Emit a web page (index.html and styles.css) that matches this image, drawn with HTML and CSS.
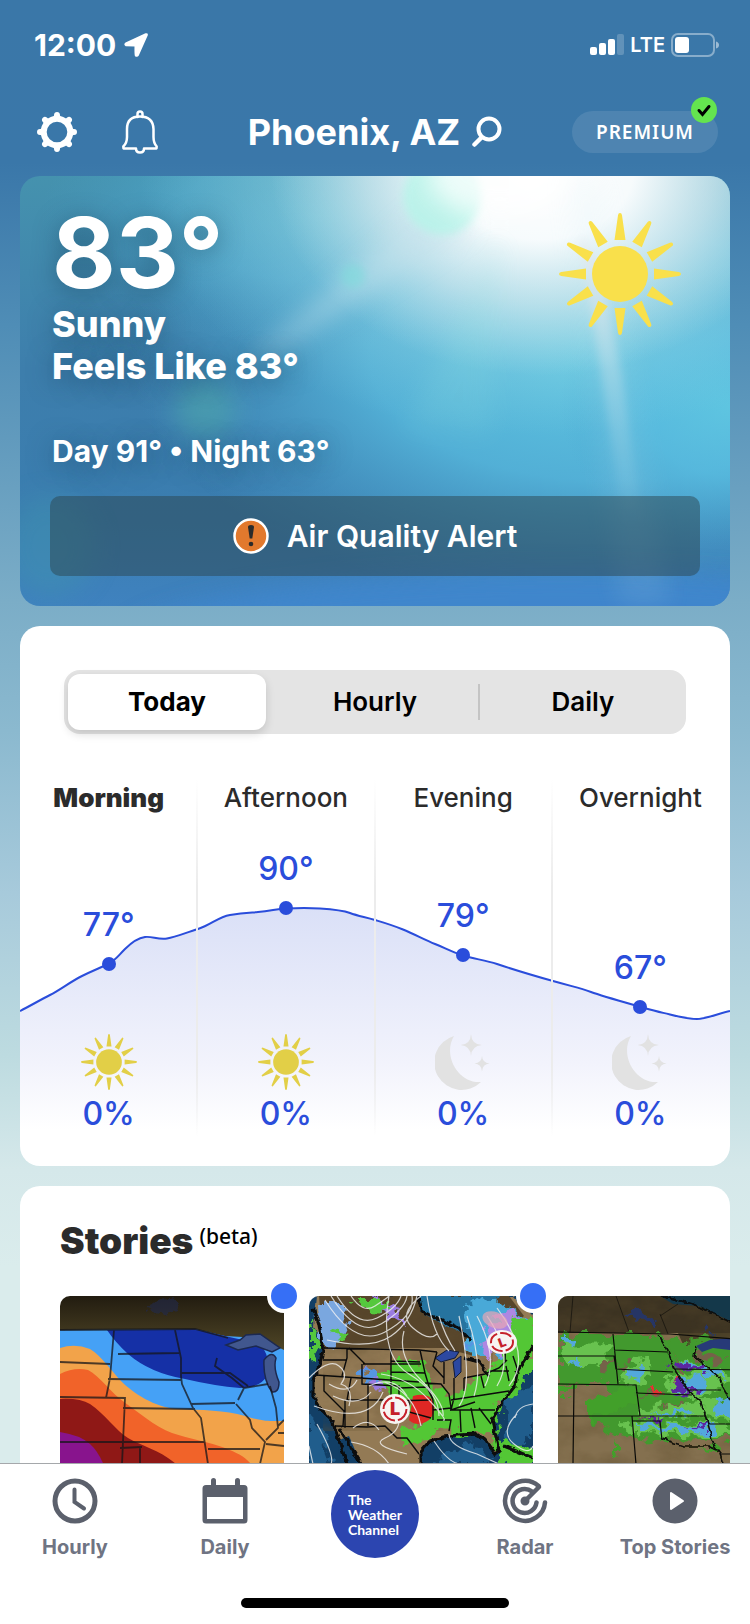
FILE: index.html
```html
<!DOCTYPE html>
<html lang="en">
<head>
  <meta charset="UTF-8" />
  <meta name="viewport" content="width=device-width, initial-scale=1.0"/>
  <title>Weather - Phoenix, AZ</title>
  <link rel="stylesheet" href="styles.css">
</head>
<body>
  <!-- shared icons -->
  <svg class="defs" aria-hidden="true">
    <defs>
      <path id="ray" d="M55.5 27L59 2.2Q59.3 0 61 0T63 2.2L66.5 27z"/>
      <symbol id="sun" viewBox="0 0 122 122">
        <circle cx="61" cy="61" r="28"/>
        <use href="#ray"/>
        <use href="#ray" transform="rotate(30 61 61)"/>
        <use href="#ray" transform="rotate(60 61 61)"/>
        <use href="#ray" transform="rotate(90 61 61)"/>
        <use href="#ray" transform="rotate(120 61 61)"/>
        <use href="#ray" transform="rotate(150 61 61)"/>
        <use href="#ray" transform="rotate(180 61 61)"/>
        <use href="#ray" transform="rotate(210 61 61)"/>
        <use href="#ray" transform="rotate(240 61 61)"/>
        <use href="#ray" transform="rotate(270 61 61)"/>
        <use href="#ray" transform="rotate(300 61 61)"/>
        <use href="#ray" transform="rotate(330 61 61)"/>
      </symbol>
      <symbol id="moon" viewBox="0 0 56 56">
        <path d="M19 2A27.5 27.5 0 1 0 46 48C24 50 7 22 19 2z"/>
        <path d="M36 0Q36.500 10.500 47 11Q36.500 12 36 22Q35.500 12 25.500 11Q35.500 10.500 36 0z"/>
        <path d="M47 22Q47.500 29 54.500 29.500Q47.500 30 47 37.500Q46.500 30 39.500 29.500Q46.500 29 47 22z"/>
      </symbol>
      <path id="tooth" d="M16.500 8L17 3Q17.200 0 20 0T23 3L23.500 8z"/>
      <filter id="rough" x="-10%" y="-10%" width="120%" height="120%">
        <feTurbulence type="fractalNoise" baseFrequency="0.09" numOctaves="3" seed="4"/>
        <feDisplacementMap in="SourceGraphic" scale="20" xChannelSelector="R" yChannelSelector="G"/>
      </filter>
      <filter id="coast" x="-5%" y="-5%" width="110%" height="110%">
        <feTurbulence type="fractalNoise" baseFrequency="0.15" numOctaves="2" seed="7"/>
        <feDisplacementMap in="SourceGraphic" scale="5" xChannelSelector="R" yChannelSelector="G"/>
      </filter>
      <filter id="terrain" x="0" y="0" width="100%" height="100%">
        <feTurbulence type="fractalNoise" baseFrequency="0.03 0.05" numOctaves="4" seed="9"/>
        <feColorMatrix values="0 0 0 0 0.12  0 0 0 0 0.08  0 0 0 0 0.03  1.6 0 0 0 -0.55"/>
      </filter>
    </defs>
  </svg>

  <div class="app">
    <div class="status">
      <div class="status-left">
        <span class="clock">12:00</span>
        <svg width="24" height="24" viewBox="0 0 24 24"><path fill="#fff" d="M1.500 9.500L21.500.3Q24.500-.3 23.700 2.500L14.800 22.500Q13.500 24.800 11 23.200Q10.300 22.500 10.500 13.500L1.700 13.200Q-1 11.500 1.500 9.500z"/></svg>
      </div>
      <div class="status-right">
        <svg width="34" height="22" viewBox="0 0 34 22" fill="#fff">
          <rect x="0" y="13" width="7" height="8" rx="2"/>
          <rect x="9" y="9" width="7" height="12" rx="2"/>
          <rect x="18" y="5" width="7" height="16" rx="2"/>
          <rect x="27" y="0" width="7" height="21" rx="2" opacity=".2"/>
        </svg>
        <span class="network">LTE</span>
        <svg width="48" height="24" viewBox="0 0 48 24">
          <rect x="1" y="1" width="42" height="22" rx="6" fill="none" stroke="#fff" stroke-opacity=".4" stroke-width="2"/>
          <rect x="4" y="4" width="14" height="16" rx="3" fill="#fff"/>
          <path d="M45 8.500Q48 9.500 48 12T45 15.500z" fill="#fff" fill-opacity=".5"/>
        </svg>
      </div>
    </div>

    <header class="header">
      <div class="header-actions">
        <button class="icon-button" aria-label="Settings">
          <svg width="40" height="40" viewBox="0 0 40 40" fill="#fff">
            <circle cx="20" cy="20" r="13.300" fill="none" stroke="#fff" stroke-width="6"/>
            <use href="#tooth"/>
            <use href="#tooth" transform="rotate(45 20 20)"/>
            <use href="#tooth" transform="rotate(90 20 20)"/>
            <use href="#tooth" transform="rotate(135 20 20)"/>
            <use href="#tooth" transform="rotate(180 20 20)"/>
            <use href="#tooth" transform="rotate(225 20 20)"/>
            <use href="#tooth" transform="rotate(270 20 20)"/>
            <use href="#tooth" transform="rotate(315 20 20)"/>
          </svg>
        </button>
        <button class="icon-button" aria-label="Notifications">
          <svg width="36" height="44" viewBox="0 0 36 44" fill="none" stroke="#fff" stroke-width="2.500" stroke-linejoin="round" stroke-linecap="round">
            <path d="M15.500 7V4Q15.500 1.500 18 1.500T20.500 4V7"/>
            <path d="M14 38.500H1.500L1.300 36.500Q5 33 5 27V19Q5 6.500 18 6.500T31.500 19V27Q31.500 33 34.700 36.500L34.500 38.500H22Q22 42.500 18 42.500T14 38.500z"/>
          </svg>
        </button>
      </div>
      <div class="place">
        <h1 class="city">Phoenix, AZ</h1>
        <button class="icon-button" aria-label="Search location">
          <svg width="30" height="32" viewBox="0 0 30 32" fill="none" stroke="#fff" stroke-width="4" stroke-linecap="round">
            <circle cx="17" cy="13" r="10.500"/>
            <path d="M9 22L2.500 28.500" stroke-width="4.500"/>
          </svg>
        </button>
      </div>
      <button class="premium">PREMIUM
        <svg class="premium-check" width="26" height="26" viewBox="0 0 26 26">
          <circle cx="13" cy="13" r="13" fill="#64e44f"/>
          <path d="M8 13.500L11.500 17.500L18 9.500" fill="none" stroke="#000" stroke-width="3" stroke-linecap="round"/>
        </svg>
      </button>
    </header>

    <main class="content">
      <section class="hero">
        <!-- sunlit sky -->
        <svg class="sky" viewBox="0 0 710 430" preserveAspectRatio="none" aria-hidden="true">
          <defs>
            <linearGradient id="skyBase" x1="0" y1="0" x2="0" y2="1">
              <stop offset="0" stop-color="#4592ae"/>
              <stop offset=".45" stop-color="#3d7eac"/>
              <stop offset=".8" stop-color="#3a7db0"/>
              <stop offset="1" stop-color="#3f82bf"/>
            </linearGradient>
            <radialGradient id="aqua">
              <stop offset="0" stop-color="#60c8e2"/>
              <stop offset=".5" stop-color="#58bce0" stop-opacity=".8"/>
              <stop offset="1" stop-color="#4ba4d0" stop-opacity="0"/>
            </radialGradient>
            <radialGradient id="glare">
              <stop offset="0" stop-color="#fff"/>
              <stop offset=".35" stop-color="#fff" stop-opacity=".92"/>
              <stop offset=".65" stop-color="#e6f1f3" stop-opacity=".55"/>
              <stop offset="1" stop-color="#c5e8ee" stop-opacity="0"/>
            </radialGradient>
            <radialGradient id="haze">
              <stop offset="0" stop-color="#d5edf0" stop-opacity=".75"/>
              <stop offset=".6" stop-color="#a9dce5" stop-opacity=".4"/>
              <stop offset="1" stop-color="#8fd2e2" stop-opacity="0"/>
            </radialGradient>
            <linearGradient id="beam" x1="0" y1="0" x2="0" y2="1">
              <stop offset="0" stop-color="#e6e6ea" stop-opacity=".7"/>
              <stop offset="1" stop-color="#b5e0ee" stop-opacity="0"/>
            </linearGradient>
            <filter id="soft" filterUnits="userSpaceOnUse" x="-60" y="-60" width="830" height="550"><feGaussianBlur stdDeviation="12"/></filter>
            <filter id="softer" filterUnits="userSpaceOnUse" x="-60" y="-60" width="830" height="550"><feGaussianBlur stdDeviation="4"/></filter>
          </defs>
          <rect width="710" height="430" fill="url(#skyBase)"/>
          <ellipse cx="590" cy="180" rx="480" ry="250" fill="url(#aqua)"/>
          <ellipse cx="710" cy="230" rx="170" ry="140" fill="url(#aqua)" opacity=".8"/>
          <ellipse cx="300" cy="40" rx="280" ry="130" fill="url(#aqua)" opacity=".5"/>
          <ellipse cx="540" cy="470" rx="440" ry="75" fill="#4187cf" filter="url(#soft)" opacity=".85"/>
          <ellipse cx="30" cy="370" rx="45" ry="50" fill="#3f92b0" filter="url(#soft)" opacity=".5"/>
          <ellipse cx="520" cy="0" rx="400" ry="260" fill="url(#haze)"/>
          <ellipse cx="520" cy="-10" rx="270" ry="210" fill="url(#glare)"/>
          <path d="M420 20L230 185L245 182L450 50z" fill="#c5e2ec" opacity=".5" filter="url(#soft)"/>
          <path d="M545 0L600 430L650 430L580 0z" fill="#cdeaf2" opacity=".1" filter="url(#soft)"/>
          <path d="M560 60L580 190L604 350L622 350L602 200L580 90z" fill="url(#beam)" filter="url(#softer)"/>
          <path d="M480 60L385 250L470 260z" fill="#8fe0e0" opacity=".15" filter="url(#soft)"/>
          <circle cx="422" cy="20" r="39" fill="#b4f5e8" opacity=".75" filter="url(#softer)"/>
          <ellipse cx="480" cy="0" rx="70" ry="40" fill="#fff" opacity=".7" filter="url(#soft)"/>
          <circle cx="333" cy="100" r="12" fill="#7fdcdc" opacity=".6" filter="url(#softer)"/>
          <circle cx="185" cy="233" r="30" fill="#4faaa8" opacity=".5" filter="url(#soft)"/>
        </svg>
        <div class="hero-top">
          <div>
            <p class="temp-now">83°</p>
            <p class="condition">Sunny<br>Feels Like 83°</p>
            <p class="range">Day 91° • Night 63°</p>
          </div>
          <svg class="hero-sun" role="img" aria-label="Sunny"><use href="#sun"/></svg>
        </div>
        <button class="alert">
          <svg width="36" height="36" viewBox="0 0 36 36">
            <circle cx="18" cy="18" r="16.500" fill="#e2792d" stroke="#fff" stroke-width="2.500"/>
            <path d="M15 9Q15 7 18 7T21 9L19.300 20.500H16.700z" fill="#2b2b2b"/>
            <circle cx="18" cy="26" r="2.300" fill="#2b2b2b"/>
          </svg>
          Air Quality Alert
        </button>
      </section>

      <section class="card forecast">
        <div class="tabs" role="tablist">
          <button class="tab active" role="tab" aria-selected="true">Today</button>
          <button class="tab" role="tab" aria-selected="false">Hourly</button>
          <button class="tab" role="tab" aria-selected="false">Daily</button>
        </div>
        <div class="chart">
          <svg class="curve" viewBox="0 0 710 356" preserveAspectRatio="none" aria-hidden="true">
            <defs>
              <linearGradient id="fade" gradientUnits="userSpaceOnUse" x1="0" y1="128" x2="0" y2="350">
                <stop offset="0" stop-color="#dae0f7"/>
                <stop offset=".7" stop-color="#f2f3fc"/>
                <stop offset="1" stop-color="#fff"/>
              </linearGradient>
            </defs>
            <path fill="url(#fade)" d="M0 231C10 226 20 220 30 215S50 202 62 196S80 188 88 184S98 176 105 169S118 158 125 157S138 160 147 158.500S165 153 178 149S198 137 210 135S225 133 238 132S256 129 266 128.500S285 127.500 300 128.500S322 130 330 133S345 137 355 140S372 145 383 149.500S405 160 415 164S432 172 443 175.500S465 180 477 184S508 194 533 201S560 208 571 212S600 221 621 227S640 232 650 234.500S668 239 677 239S700 233 710 231V356H0z"/>
            <path fill="none" stroke="#2a4ddb" stroke-width="2" vector-effect="non-scaling-stroke" d="M0 231C10 226 20 220 30 215S50 202 62 196S80 188 88 184S98 176 105 169S118 158 125 157S138 160 147 158.500S165 153 178 149S198 137 210 135S225 133 238 132S256 129 266 128.500S285 127.500 300 128.500S322 130 330 133S345 137 355 140S372 145 383 149.500S405 160 415 164S432 172 443 175.500S465 180 477 184S508 194 533 201S560 208 571 212S600 221 621 227S640 232 650 234.500S668 239 677 239S700 233 710 231"/>
          </svg>
          <ul class="parts">
            <li class="part">
              <h2 class="part-name current">Morning</h2>
              <div class="point" style="padding-top: 89px"><span>77°</span><i class="dot"></i></div>
              <svg class="part-icon sunny"><use href="#sun"/></svg>
              <span class="rain">0%</span>
            </li>
            <li class="part">
              <h2 class="part-name">Afternoon</h2>
              <div class="point" style="padding-top: 33px"><span>90°</span><i class="dot"></i></div>
              <svg class="part-icon sunny"><use href="#sun"/></svg>
              <span class="rain">0%</span>
            </li>
            <li class="part">
              <h2 class="part-name">Evening</h2>
              <div class="point" style="padding-top: 80px"><span>79°</span><i class="dot"></i></div>
              <svg class="part-icon night"><use href="#moon"/></svg>
              <span class="rain">0%</span>
            </li>
            <li class="part">
              <h2 class="part-name">Overnight</h2>
              <div class="point" style="padding-top: 132px"><span>67°</span><i class="dot"></i></div>
              <svg class="part-icon night"><use href="#moon"/></svg>
              <span class="rain">0%</span>
            </li>
          </ul>
        </div>
      </section>

      <section class="card stories">
        <h2 class="stories-title">Stories <span class="beta">(beta)</span></h2>
        <div class="story-row">
          <a class="story" href="#" aria-label="Temperature outlook">
            <svg class="thumb" viewBox="0 0 224 240" preserveAspectRatio="xMidYMin slice">
              <defs>
                <linearGradient id="north" x1="0" y1="0" x2="0" y2="1">
                  <stop offset="0" stop-color="#221c10"/>
                  <stop offset="1" stop-color="#544a28"/>
                </linearGradient>
              </defs>
              <rect width="224" height="60" fill="url(#north)"/>
              <ellipse cx="102" cy="10" rx="14" ry="8" fill="#232c4e" opacity=".6" filter="url(#rough)"/>
              <path d="M0 34L135 33L165 40L200 42L224 54V240H0z" fill="#45a1f6"/>
              <path d="M47 34L135 33L165 40L200 48Q212 62 207 80Q200 92 180 92Q155 90 125 83Q90 77 68 58Q55 46 47 34z" fill="#1530a6"/>
              <path d="M0 52Q15 47 30 53C42 60 52 76 62 86S95 112 118 113S165 114 185 120S210 125 224 125V240H0z" fill="#f2a34a"/>
              <path d="M0 78Q14 71 28 74C40 80 52 98 64 106S95 131 112 137S150 146 165 152S188 162 196 175V240H0z" fill="#f16329"/>
              <path d="M0 103Q20 102 30 108C45 118 55 134 68 142S100 154 116 168L150 240H0z" fill="#8f1816"/>
              <path d="M0 136Q20 139 30 148T46 175V240H0z" fill="#88148d"/>
              <path d="M166 49L180 44L186 39L200 38L220 52L212 56L196 50L178 54zM204 64Q212 54 216 62Q213 72 219 86Q219 97 212 96Q203 84 204 64z" fill="#41578e" stroke="#1c2950" stroke-width="1.500"/>
              <g fill="none" stroke="#15151a" stroke-opacity=".75" stroke-width="1.800">
                <path d="M0 34L135 33L168 42M115 34L121 62V80L122 88L133 112L141 122L144 142L148 168V240M54 34L50 82L46 102M58 58L119 57M121 77H170L188 90M48 83L122 84M0 66L50 68M0 101L65 102L62 168M63 112L135 113M0 146H145M60 152L82 151M80 152V185M131 108L175 107M148 153H200M157 62L155 70L172 82L184 92L208 88M178 104L184 92M176 108L190 124L192 132L205 146L200 168M210 90L216 112L218 132L206 144M218 137H224M206 148L224 150M218 130L224 124"/>
              </g>
            </svg>
            <i class="unread"></i>
          </a>
          <a class="story" href="#" aria-label="National weather map">
            <svg class="thumb" viewBox="0 0 224 240" preserveAspectRatio="xMidYMin slice">
              <rect width="224" height="240" fill="#123f66"/>
              <path d="M0 120Q30 140 20 240H0zM125 168L160 145L180 168zM195 100L224 90V140L200 150z" fill="#2a72a6" opacity=".6" filter="url(#rough)"/>
              <path d="M8 0H205L224 20V62L213 78L200 92L190 108L183 122L182 134L190 148V158L183 155L174 140L150 137L132 142L118 147L112 158V240H42L38 168L25 128L10 110L3 92L10 68L13 54L5 30z" fill="#937a54" filter="url(#coast)"/>
              <path d="M10 0H200L215 20L165 60L135 52H14z" fill="#493820" opacity=".8"/>
              <rect x="14" y="0" width="170" height="135" filter="url(#terrain)" opacity=".45"/>
              <path d="M32 168L28 145L40 140L52 168z" fill="#123f66"/>
              <path d="M112 0H140L190 0L178 20L165 45L150 35L128 25L110 15z" fill="#27739f" filter="url(#coast)"/>
              <g filter="url(#rough)">
                <path d="M8 8H42L30 55L10 45z" fill="#7aa7df"/>
                <path d="M60 0L88 10L94 28L80 24zM60 72L76 88L70 95L55 78z" fill="#9a7ce0"/>
                <path d="M155 10L190 5L222 28L210 40L190 60L160 58z" fill="#48a9d8"/>
                <path d="M180 25L205 15L224 38L195 55L172 65z" fill="#ae87e2"/>
                <path d="M0 30L12 50L0 66zM20 35L40 38L34 46zM44 5L80 5L85 15L60 14z" fill="#55c83c"/>
                <path d="M85 65L112 65L122 88L138 100L150 96L178 74L196 68L220 62V80L205 100L190 108L186 140L140 135L130 128L118 148L92 150L90 135L112 130L98 108L75 92L70 80z" fill="#52c735"/>
                <path d="M205 25L224 20V70L200 78L182 68L200 50z" fill="#52c735"/>
                <path d="M184 142L200 145L224 150V180L190 165z" fill="#52c735"/>
                <path d="M48 80L66 70L72 82L58 88zM158 50L166 46V54z" fill="#5796e2"/>
              </g>
              <path d="M104 100Q120 96 124 106T120 124Q108 132 100 124z" fill="#df2724"/>
              <path d="M126 62L138 54L150 56L146 62L132 66zM144 66L152 60V76L146 82z" fill="#2c48a0" stroke="#111b38"/>
              <g fill="none" stroke="#0b0b0b" stroke-width="1.400">
                <path d="M14 52L110 54L128 56M14 64H38M38 53V62L33 80M7 79L110 86M40 52L56 68M54 68H112M82 54V105M53 68V88L90 90V105M15 80V95L35 115L34 130M42 82L38 104H80M59 88V130M36 104V132M26 130L58 131L76 130L88 142L98 142L110 158M82 65L111 66M82 76L116 77M90 92L118 91L124 104M82 105L122 104M100 105V116L122 122M111 54L116 77L124 104L124 124M116 87L132 88L140 98L142 112M128 56L124 70L135 82M135 66V88M145 82V102L142 114L166 106M155 82V95M124 114L142 112M142 104L200 95M141 114H186M128 124H142L140 135M151 114L152 136M162 112L166 132M170 112L182 128M155 82L176 78L190 72L198 64M172 80L175 92M180 75H200M197 70L200 85M197 40L196 65M204 60L210 78"/>
              </g>
              <g fill="none" stroke="#080808" stroke-width="3" filter="url(#coast)">
                <path d="M4 12L10 28L14 54L11 68L4 84L4 100L14 116L24 126M24 127L38 168M30 132L52 168M112 168V155L120 146L134 141L148 139L168 138L176 144L186 158L190 155L186 136L184 122L192 108L206 90L208 76L224 50M110 0L112 15L150 32L162 45M155 62L170 66L180 80M195 150L224 162"/>
              </g>
              <g fill="none" stroke="#f2f2f2" stroke-width="1.200" opacity=".8">
                <path d="M28 0Q48 32 68 22T92 0M22 0Q48 42 72 28T98 0M16 4Q46 52 76 36T103 0M42 0Q54 18 66 10T80 0M18 44Q62 54 82 40T108 0M112 0Q88 18 104 32T128 38M80 0Q70 60 100 78T130 120M95 35Q88 60 112 84T134 120M0 82Q20 62 30 70T32 88Q45 92 40 110M20 88Q40 100 48 84M24 100Q50 112 62 96M5 110Q60 130 74 96M118 0Q124 40 140 55M130 20Q136 40 146 55M150 20Q165 90 150 110M158 20Q175 70 165 100M168 20Q190 62 176 90M178 20Q206 60 188 90M188 12Q224 60 200 90M72 78Q100 82 120 104T134 124M75 86Q105 96 112 130M60 90Q85 78 98 100M90 120Q92 135 76 142T98 158M70 134Q60 120 44 132M8 128Q26 160 22 168M0 150L4 168M42 146Q68 150 80 168M125 145Q140 168 152 168M140 138Q140 150 168 158L190 168M208 118Q190 136 205 148T224 150M224 108Q208 110 206 122"/>
              </g>
              <g>
                <circle cx="86" cy="113" r="15" fill="#f7f4f2"/>
                <circle cx="86" cy="113" r="11.500" fill="none" stroke="#c5202a" stroke-width="2" stroke-dasharray="15 3"/>
                <text class="low" x="86" y="119" text-anchor="middle">L</text>
                <ellipse cx="186" cy="24" rx="13" ry="8" fill="#e7a7b5" opacity=".7" transform="rotate(20 186 24)"/>
                <ellipse cx="193" cy="46" rx="15" ry="12" fill="#f7f4f2"/>
                <ellipse cx="193" cy="46" rx="11" ry="9" fill="none" stroke="#c5202a" stroke-width="2" stroke-dasharray="12 3"/>
                <text class="low small" x="193" y="51" text-anchor="middle" transform="rotate(-20 193 46)">L</text>
              </g>
            </svg>
            <i class="unread"></i>
          </a>
          <a class="story" href="#" aria-label="Plains radar">
            <svg class="thumb" viewBox="0 0 224 240" preserveAspectRatio="xMidYMin slice">
              <rect width="224" height="240" fill="#84704f"/>
              <rect width="224" height="37" fill="#3c3322"/>
              <path d="M120 37H224V60H130z" fill="#4a4028"/>
              <rect width="224" height="240" filter="url(#terrain)" opacity=".45"/>
              <path d="M102 0H224V30L172 25L140 10L115 8z" fill="#14384a"/>
              <path d="M68 18L80 12L98 26L92 30zM144 36L152 34V38z" fill="#273565" filter="url(#rough)"/>
              <g filter="url(#rough)">
                <path d="M0 38H98L112 45L118 68L125 80L140 92L165 95L190 90V130L170 142L110 146L60 140L45 130L28 125L35 112L60 100L40 85L0 90z" fill="#43992d"/>
                <path d="M110 45L150 42L190 55L190 100L172 108L150 100L120 66z" fill="#43992d"/>
                <path d="M62 68L80 70L75 76L64 74zM100 110L130 105L125 114zM82 122L98 112L100 122zM44 64L56 60L50 80L40 75zM140 55L165 62L160 68L138 62zM78 98L110 96L100 102z" fill="#75624a"/>
                <path d="M30 105L70 90L80 105L50 118L30 125zM54 150L58 145L60 166L54 160zM140 152L165 150L160 156zM0 92L18 90L14 98L0 98z" fill="#43a02c"/>
                <path d="M0 50L50 48L52 66L8 72zM60 80L80 62L95 66L88 90L64 86zM105 80L150 76L160 92L140 104L112 95zM120 64L180 78L190 90L145 84zM80 112L172 105V122L140 120L90 122zM60 126L172 128L170 140L75 138z" fill="#67c24f"/>
                <path d="M2 42L16 42L14 50L2 52zM8 66L22 66L16 72zM72 72L86 66L84 84L70 82zM110 84L148 80L146 98L122 96zM120 66L160 74L172 84L150 80zM155 105L190 98V118L160 118zM76 128L160 130L158 136L80 134zM92 116L120 114L140 116L120 120z" fill="#52a8dc"/>
              </g>
              <g filter="url(#rough)">
                <path d="M112 68L148 72L145 76L115 72zM112 86L122 82L128 92L144 92L142 98L116 94zM112 98L132 97L130 101zM84 122L104 122V126zM124 130L148 130V133z" fill="#5b25a2"/>
                <path d="M94 94L106 94V99L96 98zM112 82L118 82L114 90z" fill="#e03030"/>
              </g>
              <path d="M138 50L152 44L172 42H190V56L155 52L144 56z" fill="#273a78"/>
              <g fill="none" stroke="#0a0a08" stroke-width="1.200">
                <path d="M0 36L112 38L190 44M55 38L60 88M0 60L56 60L58 73L115 76M56 54L110 56M0 88L78 89L82 120M16 88L15 168M0 120H148M74 120L78 168M74 125H102L104 144M78 97L134 99M116 73L190 74M130 94H163M150 128H190M162 158H190"/>
                <path d="M100 38L110 56L118 76L130 94L142 104L150 128L156 150L162 158L165 168M104 143L126 150L150 150L158 154M103 0L135 8L172 26M138 50L136 60L150 72L162 82L165 92L172 104" filter="url(#coast)" stroke-width="1.600"/>
                <path d="M15 0L12 36M58 0L71 36M102 18L110 38M120 8L102 20" stroke-width="1" opacity=".6"/>
              </g>
            </svg>
          </a>
        </div>
      </section>
    </main>

    <nav class="bottom-nav">
      <a class="nav-item" href="#">
        <svg width="46" height="46" viewBox="0 0 46 46" fill="none" stroke="#5b606c" stroke-width="5"><circle cx="23" cy="23" r="20"/><path d="M22.500 11.500V24L32 30.500" stroke-width="4" stroke-linecap="round"/></svg>
        Hourly
      </a>
      <a class="nav-item" href="#">
        <svg width="46" height="46" viewBox="0 0 46 46" fill="#5b606c"><path fill-rule="evenodd" d="M4 7H42Q45.500 7 45.500 10.500V42Q45.500 45.500 42 45.500H4Q.5 45.500 .5 42V10.500Q.5 7 4 7zM5 19V41H41V19z"/><rect x="9" y="0" width="5" height="12" rx="2.500"/><rect x="33" y="0" width="5" height="12" rx="2.500"/></svg>
        Daily
      </a>
      <a class="nav-logo" href="#"><span>The<br>Weather<br>Channel</span></a>
      <a class="nav-item" href="#">
        <svg width="46" height="46" viewBox="0 0 46 46" fill="none" stroke="#5b606c" stroke-width="5" stroke-linecap="round"><path d="M36.500 8A20 20 0 1 0 43 24.500M30 13.500A12 12 0 1 0 34.500 24.500" stroke-width="4.500"/><path d="M23 23L37 9" stroke-width="4.500"/><circle cx="23" cy="23" r="3" fill="#5b606c" stroke-width="3"/></svg>
        Radar
      </a>
      <a class="nav-item" href="#">
        <svg width="46" height="46" viewBox="0 0 46 46"><circle cx="23" cy="23" r="22.500" fill="#5b606c"/><path d="M19 15L31 23L19 31z" fill="#fff" stroke="#fff" stroke-width="2" stroke-linejoin="round"/></svg>
        Top Stories
      </a>
    </nav>
    <div class="home-bar"><span></span></div>
  </div>
</body>
</html>
```
FILE: styles.css
```css
* {
  margin: 0;
  padding: 0;
  box-sizing: border-box;
}

body {
  font-family: Inter, "Liberation Sans", sans-serif;
  color: #2b2b2b;
}

button {
  border: none;
  background: none;
  font-family: inherit;
  color: inherit;
  cursor: pointer;
}

a {
  color: inherit;
  text-decoration: none;
}

svg {
  display: block;
  flex-shrink: 0;
}

.defs {
  position: absolute;
  width: 0;
  height: 0;
}

.app {
  display: flex;
  flex-direction: column;
  height: 100vh;
  background: linear-gradient(#3a77a8 0%, #3a77a9 10%, #4f8db6 20%, #7badc7 37%, #8bb9cf 45%, #a7cadb 55%, #bddbe0 65%, #d5e8ea 72%, #daecec 78%);
}

/* Status bar */
.status {
  display: flex;
  justify-content: space-between;
  align-items: center;
  height: 90px;
  padding: 0 31px 0 34px;
  color: #fff;
}

.status-left,
.status-right {
  display: flex;
  align-items: center;
  gap: 8px;
}

.status-right {
  gap: 6px;
}

.clock {
  font-size: 30px;
  font-weight: 700;
}

.network {
  font-size: 20px;
  font-weight: 600;
}

/* Header */
.header {
  display: grid;
  grid-template-columns: 1fr auto 1fr;
  align-items: center;
  height: 86px;
  padding: 0 32px 2px;
  color: #fff;
}

.header-actions {
  display: flex;
  align-items: center;
  gap: 45px;
  padding-left: 5px;
}

.place {
  display: flex;
  align-items: center;
  gap: 12px;
}

.city {
  font-size: 36px;
  line-height: 44px;
  font-weight: 700;
  white-space: nowrap;
}

.premium {
  position: relative;
  justify-self: end;
  height: 42px;
  padding: 0 24px;
  border-radius: 21px;
  background: rgba(255, 255, 255, 0.1);
  font-family: "Noto Sans", sans-serif;
  font-size: 19px;
  font-weight: 600;
  letter-spacing: 1px;
}

.premium-check {
  position: absolute;
  top: -14px;
  right: 1px;
}

/* Content */
.content {
  display: flex;
  flex-direction: column;
  flex: 1;
  gap: 20px;
  min-height: 0;
  padding: 0 20px 20px;
  overflow-y: auto;
  scrollbar-width: none;
}

.content > * {
  flex-shrink: 0;
}

.hero {
  position: relative;
  padding: 27px 30px 30px;
  border-radius: 20px;
  overflow: hidden;
  color: #fff;
}

.sky {
  position: absolute;
  inset: 0;
  width: 100%;
  height: 100%;
}

.hero-top {
  position: relative;
  display: flex;
  justify-content: space-between;
  padding: 0 19px 0 2px;
  text-shadow: 0 4px 24px rgba(20, 60, 85, 0.5);
}

.hero-sun {
  width: 122px;
  height: 122px;
  margin-top: 10px;
  fill: #f9e04b;
}

.temp-now {
  font-size: 98px;
  line-height: 100px;
  font-weight: 700;
}

.condition {
  font-size: 36px;
  line-height: 42px;
  font-weight: 800;
}

.range {
  margin-top: 44px;
  font-size: 30px;
  line-height: 40px;
  font-weight: 700;
}

.alert {
  position: relative;
  display: flex;
  align-items: center;
  justify-content: center;
  gap: 18px;
  width: 100%;
  height: 80px;
  margin-top: 25px;
  border-radius: 10px;
  background: rgba(43, 69, 80, 0.5);
  font-size: 30px;
  font-weight: 600;
}

.card {
  border-radius: 20px;
  background: #fff;
  overflow: hidden;
}

/* Forecast */
.forecast {
  padding: 44px 0 30px;
}

.tabs {
  display: grid;
  grid-template-columns: repeat(3, 1fr);
  gap: 10px;
  height: 64px;
  margin: 0 44px;
  padding: 4px;
  border-radius: 16px;
  background: #e4e4e4;
}

.tab {
  position: relative;
  padding-bottom: 2px;
  border-radius: 12px;
  font-size: 26px;
  font-weight: 600;
  color: #000;
}

.tab.active {
  background: #fff;
  font-weight: 700;
  box-shadow: 0 4px 10px rgba(0, 0, 0, 0.14);
}

.tab:last-child::before {
  content: "";
  position: absolute;
  top: 10px;
  bottom: 10px;
  left: -6px;
  width: 2px;
  background: #c4c4c4;
}

.chart {
  position: relative;
  margin-top: 46px;
}

.curve {
  position: absolute;
  inset: 0;
  width: 100%;
  height: 100%;
}

.parts {
  position: relative;
  display: grid;
  grid-template-columns: repeat(4, 1fr);
  height: 356px;
  padding-left: 1px;
  list-style: none;
}

.part {
  display: flex;
  flex-direction: column;
  align-items: center;
  border-right: 2px solid;
  border-image: linear-gradient(#fff, #ececec 30%, #ececec 80%, transparent) 1;
}

.part:last-child {
  border-color: transparent;
  border-image: none;
}

.part-name {
  font-size: 26px;
  line-height: 36px;
  font-weight: 500;
}

.part-name.current {
  font-weight: 900;
}

.point {
  display: flex;
  flex-direction: column;
  align-items: center;
  height: 218px;
}

.point,
.rain {
  color: #2a4ddb;
  font-size: 32px;
  line-height: 40px;
  font-weight: 500;
}

.dot {
  width: 14px;
  height: 14px;
  margin-top: 12px;
  border-radius: 50%;
  background: #2a4ddb;
}

.part-icon {
  width: 56px;
  height: 56px;
  margin-bottom: 4px;
}

.sunny {
  fill: #e2cf47;
}

.night {
  fill: #e2e2e2;
}

/* Stories */
.stories {
  padding: 30px 0 40px 40px;
}

.stories-title {
  display: flex;
  gap: 6px;
  font-size: 37px;
  line-height: 50px;
  font-weight: 900;
}

.beta {
  font-family: "Noto Sans", sans-serif;
  font-size: 21px;
  line-height: 40px;
  font-weight: 500;
  color: #000;
}

.story-row {
  display: flex;
  gap: 25px;
  margin-top: 30px;
}

.story {
  position: relative;
  flex: 0 0 224px;
}

.thumb {
  width: 224px;
  height: 240px;
  border-radius: 10px;
}

.unread {
  position: absolute;
  top: -17px;
  right: -17px;
  width: 34px;
  height: 34px;
  border: 4px solid #fff;
  border-radius: 50%;
  background: #366ff6;
}

.low {
  fill: #c5202a;
  font-size: 18px;
  font-weight: 900;
}

.low.small {
  font-size: 13px;
}

/* Bottom navigation */
.bottom-nav {
  display: grid;
  grid-template-columns: repeat(5, 1fr);
  justify-items: center;
  height: 110px;
  border-top: 1px solid #a5a8ab;
  background: #fff;
}

.nav-item {
  display: flex;
  flex-direction: column;
  align-items: center;
  gap: 8px;
  padding-top: 14px;
  color: #6f7483;
  font-size: 20px;
  line-height: 30px;
  font-weight: 700;
  white-space: nowrap;
}

.nav-logo {
  display: flex;
  align-items: center;
  justify-content: center;
  width: 88px;
  height: 88px;
  margin-top: 6px;
  border-radius: 50%;
  background: #2c45b0;
  color: #fff;
  font-family: Lato, sans-serif;
  font-size: 14px;
  line-height: 15px;
  font-weight: 700;
}

.home-bar {
  display: flex;
  justify-content: center;
  height: 51px;
  padding-top: 25px;
  background: #fff;
}

.home-bar span {
  width: 268px;
  height: 10px;
  border-radius: 5px;
  background: #000;
}
```
